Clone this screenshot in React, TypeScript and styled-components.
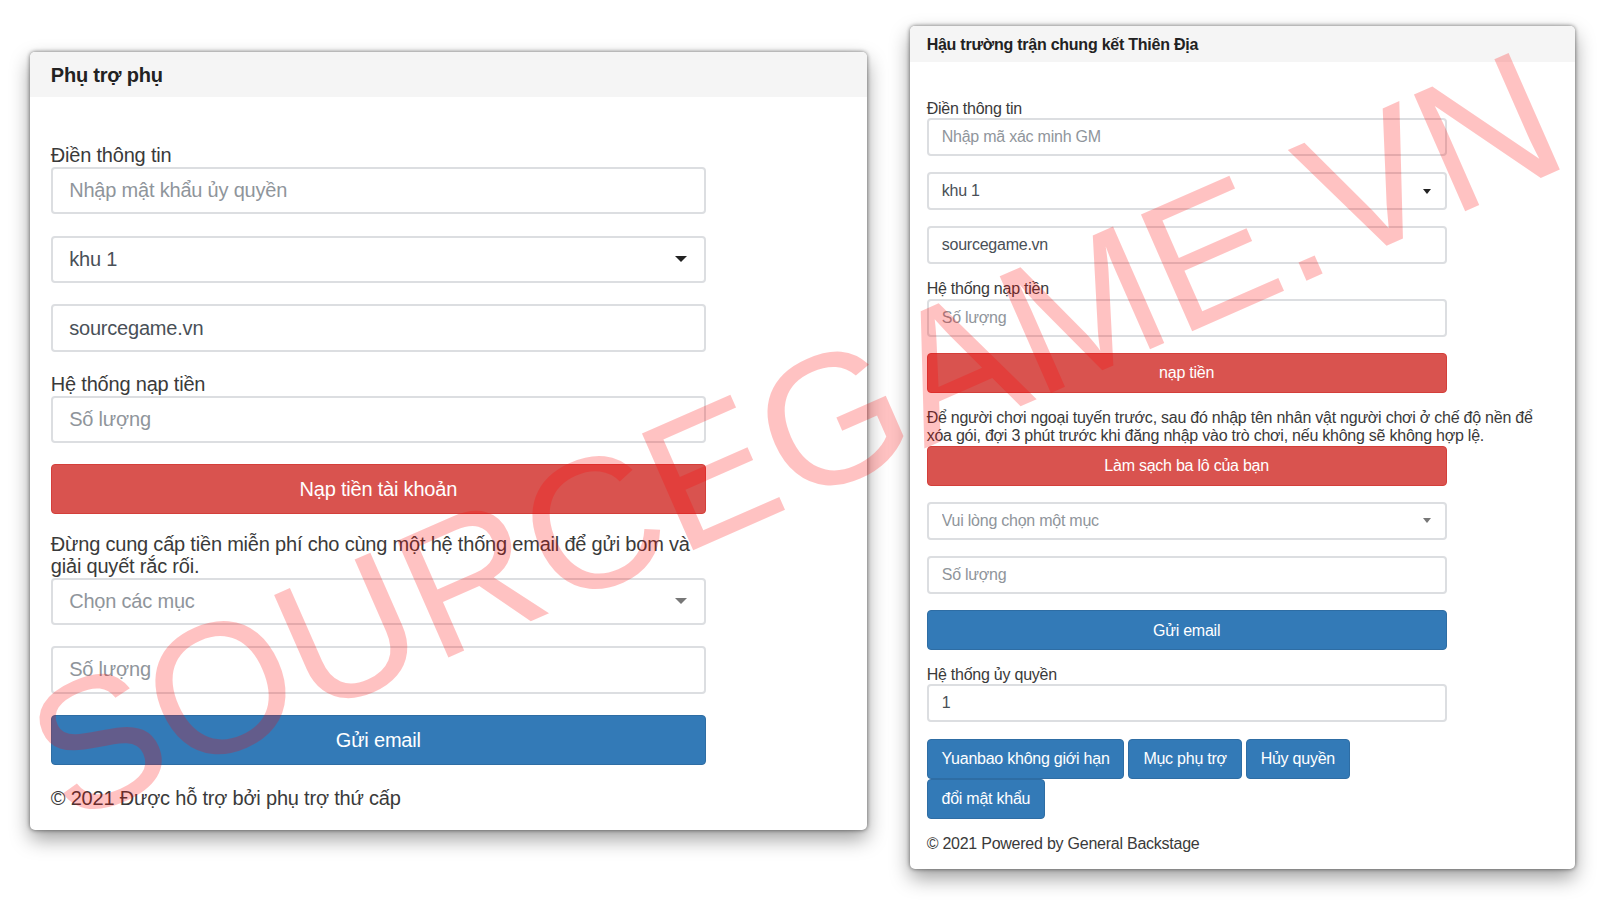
import styled, { createGlobalStyle } from "styled-components";

const GlobalStyle = createGlobalStyle`
  html, body {
    margin: 0;
    padding: 0;
    background: #fff;
  }
  * {
    box-sizing: border-box;
  }
`;

const Page = styled.div`
  position: relative;
  display: flex;
  align-items: flex-start;
  gap: 43px;
  width: 1600px;
  height: 900px;
  padding: 26px 0 0 30px;
  overflow: hidden;
  font-family: "Liberation Sans", Arial, sans-serif;
  color: #3a3a3a;
`;

const Card = styled.section<{
  $size: number;
  $width: number;
  $top: number;
  $tracking: number;
  $fieldGap: number;
}>`
  --field-gap: ${(p) => p.$fieldGap}px;
  flex: none;
  width: ${(p) => p.$width}px;
  margin-top: ${(p) => p.$top}px;
  font-size: ${(p) => p.$size}px;
  letter-spacing: ${(p) => p.$tracking}px;
  line-height: 1.2;
  background: #fff;
  border-radius: 5px;
  box-shadow: 0 9px 20px rgba(0, 0, 0, 0.38), 0 0 4px rgba(0, 0, 0, 0.55);
`;

const CardHeader = styled.header`
  display: flex;
  align-items: center;
  height: 2.25em;
  padding: 1px 1.04em 0;
  font-weight: 700;
  color: #222;
  background: #f5f5f5;
  border-radius: 5px 5px 0 0;
`;

const CardBody = styled.div<{ $bottom: number }>`
  padding: 2.37em 1.04em ${(p) => p.$bottom}px;
`;

const Form = styled.form<{ $width: number }>`
  width: ${(p) => p.$width}px;
`;

const Label = styled.label`
  display: block;
  margin-top: -0.08em;
`;

const Input = styled.input`
  display: block;
  width: 100%;
  height: 2.37em;
  margin-bottom: var(--field-gap);
  padding: 0 0.82em;
  font: inherit;
  letter-spacing: inherit;
  color: #495057;
  background: #fff;
  border: 2px solid #dcdee1;
  border-radius: 4px;
  outline: none;

  &::placeholder {
    color: #8f959b;
    opacity: 1;
  }
`;

const SelectWrap = styled.div<{ $muted?: boolean }>`
  position: relative;
  margin-bottom: var(--field-gap);

  &::after {
    content: "";
    position: absolute;
    top: 50%;
    right: 0.95em;
    margin-top: -0.16em;
    border-left: 0.3em solid transparent;
    border-right: 0.3em solid transparent;
    border-top: 0.33em solid ${(p) => (p.$muted ? "#777" : "#222")};
  }
`;

const Select = styled.select<{ $muted?: boolean }>`
  display: block;
  width: 100%;
  height: 2.37em;
  padding: 0 0.82em;
  font: inherit;
  letter-spacing: inherit;
  color: ${(p) => (p.$muted ? "#8f959b" : "#495057")};
  background: #fff;
  border: 2px solid #dcdee1;
  border-radius: 4px;
  outline: none;
  appearance: none;
`;

const Button = styled.button<{ $tone: "red" | "blue"; $block?: boolean }>`
  display: block;
  width: ${(p) => (p.$block ? "100%" : "auto")};
  height: 2.5em;
  padding: 0 0.87em;
  font: inherit;
  letter-spacing: inherit;
  color: #fff;
  white-space: nowrap;
  background: ${(p) => (p.$tone === "red" ? "#d9534f" : "#337ab7")};
  border: 1px solid ${(p) => (p.$tone === "red" ? "#d43f3a" : "#2e6da4")};
  border-radius: 4px;
`;

const Spaced = styled.div`
  margin-bottom: 1em;
`;

const Notice = styled.p<{ $width?: number; $leading: number }>`
  width: ${(p) => (p.$width ? `${p.$width}px` : "max-content")};
  max-width: ${(p) => (p.$width ? "none" : "630px")};
  margin: 0;
  line-height: ${(p) => p.$leading};
`;

const ButtonRow = styled.div`
  display: flex;
  flex-wrap: wrap;
  column-gap: 4px;
  width: 100%;
`;

const Footer = styled.p<{ $gap: number }>`
  margin: ${(p) => p.$gap}px 0 0;
`;

const Watermark = styled.div`
  position: absolute;
  left: 795px;
  top: 436px;
  transform: translate(-50%, -50%) rotate(-23.7deg);
  font-size: 185px;
  line-height: 1;
  white-space: nowrap;
  color: rgba(255, 0, 0, 0.24);
  pointer-events: none;
`;

const App = () => {
  return (
    <Page>
      <GlobalStyle />
      <Card $size={20} $width={837} $top={26} $tracking={-0.2} $fieldGap={21.4}>
        <CardHeader>Phụ trợ phụ</CardHeader>
        <CardBody $bottom={20}>
          <Form $width={655}>
            <Label>Điền thông tin</Label>
            <Input placeholder="Nhập mật khẩu ủy quyền" />
            <SelectWrap>
              <Select defaultValue="1">
                <option value="1">khu 1</option>
              </Select>
            </SelectWrap>
            <Input defaultValue="sourcegame.vn" />
            <Label>Hệ thống nạp tiền</Label>
            <Input placeholder="Số lượng" />
            <Spaced>
              <Button type="button" $tone="red" $block>
                Nạp tiền tài khoản
              </Button>
            </Spaced>
            <Notice $width={655} $leading={1.08}>
              Đừng cung cấp tiền miễn phí cho cùng một hệ thống email để gửi bom
              và giải quyết rắc rối.
            </Notice>
            <SelectWrap $muted>
              <Select $muted defaultValue="">
                <option value="">Chọn các mục</option>
              </Select>
            </SelectWrap>
            <Input placeholder="Số lượng" />
            <Button type="button" $tone="blue" $block>
              Gửi email
            </Button>
          </Form>
          <Footer $gap={21}>© 2021 Được hỗ trợ bởi phụ trợ thứ cấp</Footer>
        </CardBody>
      </Card>
      <Card $size={16} $width={665} $top={0} $tracking={-0.24} $fieldGap={16.4}>
        <CardHeader>Hậu trường trận chung kết Thiên Địa</CardHeader>
        <CardBody $bottom={16}>
          <Form $width={520}>
            <Label>Điền thông tin</Label>
            <Input placeholder="Nhập mã xác minh GM" />
            <SelectWrap>
              <Select defaultValue="1">
                <option value="1">khu 1</option>
              </Select>
            </SelectWrap>
            <Input defaultValue="sourcegame.vn" />
            <Label>Hệ thống nạp tiền</Label>
            <Input placeholder="Số lượng" />
            <Spaced>
              <Button type="button" $tone="red" $block>
                nạp tiền
              </Button>
            </Spaced>
            <Notice $leading={1.15}>
              Để người chơi ngoại tuyến trước, sau đó nhập tên nhân vật người
              chơi ở chế độ nền để xóa gói, đợi 3 phút trước khi đăng nhập vào
              trò chơi, nếu không sẽ không hợp lệ.
            </Notice>
            <Spaced>
              <Button type="button" $tone="red" $block>
                Làm sạch ba lô của bạn
              </Button>
            </Spaced>
            <SelectWrap $muted>
              <Select $muted defaultValue="">
                <option value="">Vui lòng chọn một mục</option>
              </Select>
            </SelectWrap>
            <Input placeholder="Số lượng" />
            <Spaced>
              <Button type="button" $tone="blue" $block>
                Gửi email
              </Button>
            </Spaced>
            <Label>Hệ thống ủy quyền</Label>
            <Input defaultValue="1" />
            <ButtonRow>
              <Button type="button" $tone="blue">
                Yuanbao không giới hạn
              </Button>
              <Button type="button" $tone="blue">
                Mục phụ trợ
              </Button>
              <Button type="button" $tone="blue">
                Hủy quyền
              </Button>
              <Button type="button" $tone="blue">
                đổi mật khẩu
              </Button>
            </ButtonRow>
          </Form>
          <Footer $gap={15}>© 2021 Powered by General Backstage</Footer>
        </CardBody>
      </Card>
      <Watermark>SOURCEGAME.VN</Watermark>
    </Page>
  );
};

export default App;
